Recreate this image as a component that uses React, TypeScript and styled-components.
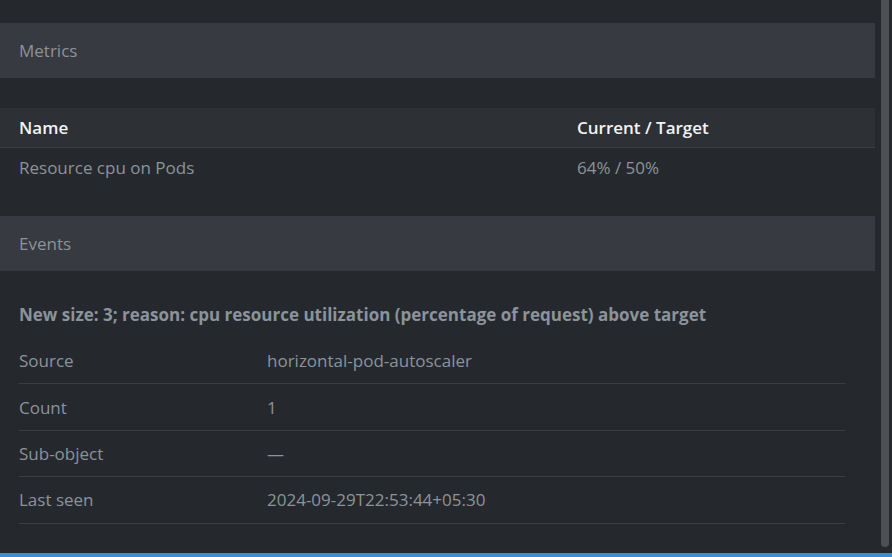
import styled, { createGlobalStyle } from "styled-components";

const GlobalStyle = createGlobalStyle`
  html, body {
    margin: 0;
    padding: 0;
    background: #25292d;
  }
  body {
    font-family: "Open Sans", "Noto Sans", sans-serif;
    font-size: 17px;
  }
`;

const Page = styled.div`
  height: 557px;
  display: flex;
  flex-direction: column;
  overflow: hidden;
  background: #25292d;
`;

const Body = styled.div`
  flex: 1;
  display: flex;
  min-height: 0;
`;

const Content = styled.div`
  flex: 1;
  padding-top: 23px;
`;

const Gutter = styled.div`
  width: 17px;
  padding: 0 3px 6px 6px;
  box-sizing: border-box;
  display: flex;
`;

const Thumb = styled.div`
  flex: 1;
  background: #4d5055;
  border-radius: 0 0 4px 4px;
`;

const StatusBar = styled.div`
  height: 4px;
  background: #3a8fd2;
`;

const SectionHeader = styled.div`
  height: 55px;
  display: flex;
  align-items: center;
  padding-left: 19px;
  background: #373a40;
  color: #8b939b;
`;

const MetricsTable = styled.div`
  margin: 30px 0 29px;
`;

const TableRow = styled.div<{ $head?: boolean }>`
  display: grid;
  grid-template-columns: 558px 1fr;
  align-items: center;
  padding-left: 19px;
  height: 39px;
  background: ${(p) => (p.$head ? "#2d3035" : "transparent")};
  border-bottom: ${(p) => (p.$head ? "1px solid #393c41" : "none")};
  color: ${(p) => (p.$head ? "#f2f3f4" : "#8b939b")};
  font-weight: ${(p) => (p.$head ? 600 : 400)};
`;

const Events = styled.div`
  padding: 32px 30px 0 19px;
`;

const EventTitle = styled.div`
  color: #8b939b;
  font-weight: 700;
  line-height: 24px;
  margin-bottom: 11px;
`;

const DetailRow = styled.div`
  display: grid;
  grid-template-columns: 248px 1fr;
  align-items: center;
  height: 45.4px;
  border-bottom: 1px solid #3a3d42;
  color: #8b939b;
`;

const details = [
  ["Source", "horizontal-pod-autoscaler"],
  ["Count", "1"],
  ["Sub-object", "—"],
  ["Last seen", "2024-09-29T22:53:44+05:30"],
];

export default function App() {
  return (
    <Page>
      <GlobalStyle />
      <Body>
        <Content>
          <SectionHeader>Metrics</SectionHeader>
          <MetricsTable>
            <TableRow $head>
              <span>Name</span>
              <span>Current / Target</span>
            </TableRow>
            <TableRow>
              <span>Resource cpu on Pods</span>
              <span>64% / 50%</span>
            </TableRow>
          </MetricsTable>
          <SectionHeader>Events</SectionHeader>
          <Events>
            <EventTitle>
              New size: 3; reason: cpu resource utilization (percentage of request) above target
            </EventTitle>
            {details.map(([label, value]) => (
              <DetailRow key={label}>
                <span>{label}</span>
                <span>{value}</span>
              </DetailRow>
            ))}
          </Events>
        </Content>
        <Gutter>
          <Thumb />
        </Gutter>
      </Body>
      <StatusBar />
    </Page>
  );
}
